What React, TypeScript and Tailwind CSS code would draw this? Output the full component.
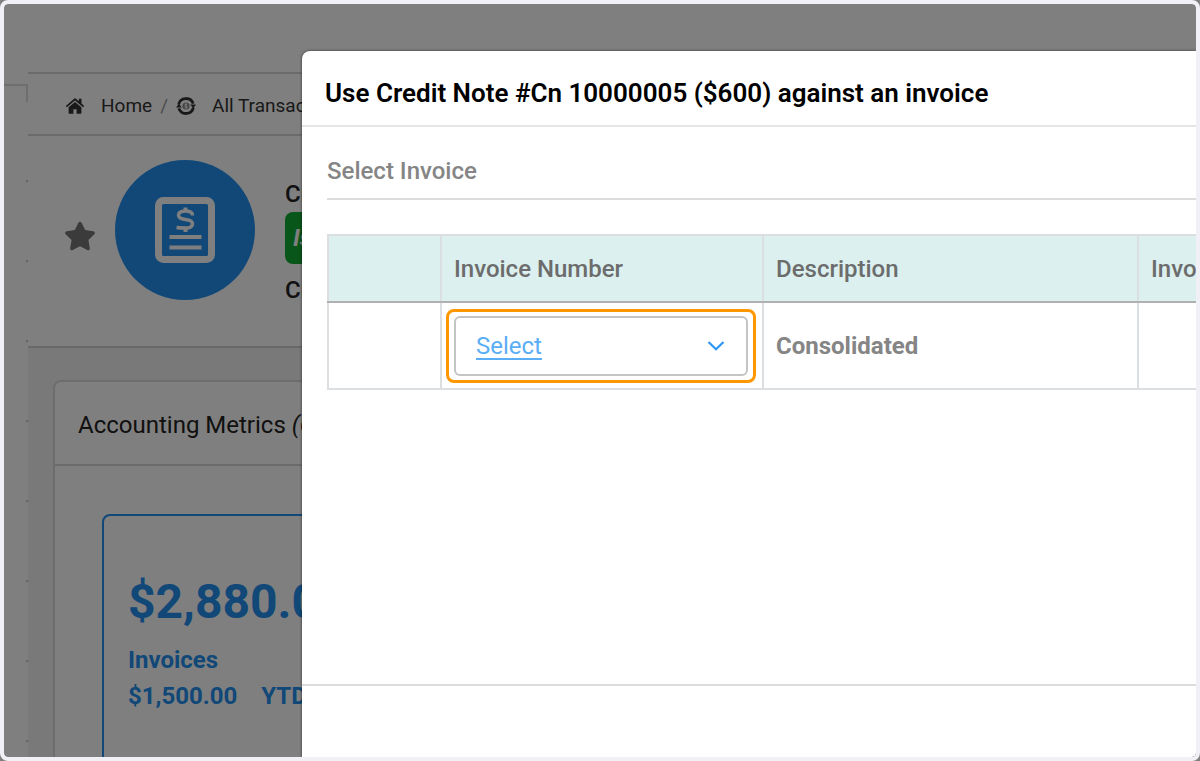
import { FaStar } from 'react-icons/fa';

const railItems = ['a', 'b', 'c', 'd', 'e', 'f', 'g', 'h'];

function HomeIcon() {
  return (
    <svg viewBox="0 0 20 18" className="h-[18px] w-5" fill="currentColor" aria-hidden="true">
      <path d="M10 1 .8 9l1.100 1.300L10 3.400l8.100 6.900L19.200 9 16.500 6.600V1.800h-2.700v2.500z" />
      <path d="M10 4.900 3.600 10.300V16c0 .5.3.8.8.8h4v-4.600h3.200v4.600h4c.5 0 .8-.3.8-.8v-5.700z" />
    </svg>
  );
}

function CycleIcon() {
  return (
    <svg viewBox="0 0 20 20" className="h-5 w-5" fill="none" aria-hidden="true">
      <path d="M2.600 8.500a7.600 7.600 0 0 1 14.600-.9" stroke="currentColor" strokeWidth="2.800" />
      <path d="M17.400 11.500a7.600 7.600 0 0 1-14.600.9" stroke="currentColor" strokeWidth="2.800" />
      <path d="M0 11.500h5.800L2.800 7.800z" fill="currentColor" />
      <path d="M20 8.500h-5.800l3 3.700z" fill="currentColor" />
      <circle cx="10" cy="10" r="3.600" fill="#8a8a8a" />
      <path
        d="M11.400 8.900c-.3-.5-.8-.7-1.400-.7-.8 0-1.300.3-1.300.9 0 1.300 2.700.5 2.700 1.800 0 .6-.6.9-1.400.9-.6 0-1.200-.3-1.400-.7M10 7.300v5.400"
        stroke="white"
        strokeWidth=".8"
      />
    </svg>
  );
}

function InvoiceIcon() {
  return (
    <svg viewBox="0 0 60 66" className="h-[66px] w-[60px]" fill="none" stroke="white" aria-hidden="true">
      <rect x="3.500" y="3.500" width="53" height="59" rx="5" strokeWidth="7" />
      <path
        d="M37.500 18.500c0-3-2.500-4.500-7-4.500s-7 1.500-7 4.300c0 2.900 2.800 3.700 7 4.200s7 1.500 7 4.200c0 2.800-2.500 4.300-7 4.300-3 0-6 0-9-.5"
        strokeWidth="3.500"
      />
      <path d="M30.500 10.500v4M30.500 30.500v4.500" strokeWidth="4" />
      <path d="M14.500 40h32M14.500 50.500h32" strokeWidth="4" />
    </svg>
  );
}

function Page() {
  return (
    <div className="flex h-full">
      {/* Side rail */}
      <aside className="w-6 shrink-0 overflow-hidden pt-20">
        <div className="h-[18px] border-t-2 border-r-2 border-[#dcdcdc]" />
        {railItems.map((item) => (
          <div key={item} className="flex h-20 items-end justify-end">
            <span className="h-0.5 w-0.5 bg-[#c4c4c4]" />
          </div>
        ))}
      </aside>

      <main className="flex min-w-0 flex-1 flex-col">
        <div className="h-[70px] shrink-0 border-b-2 border-[#d6d6d6]" />

        {/* Breadcrumb */}
        <nav className="flex h-[62px] shrink-0 items-center border-b-2 border-[#d6d6d6] pt-1 pl-[37px] text-[19px] whitespace-nowrap text-[#333]">
          <a href="#home" className="flex items-center gap-4">
            <HomeIcon />
            Home
          </a>
          <span className="px-2 text-[#999]">/</span>
          <a href="#transactions" className="flex items-center gap-4">
            <CycleIcon />
            All Transactions
          </a>
        </nav>

        {/* Record header */}
        <section className="flex h-[212px] shrink-0 items-center border-b-2 border-[#d2d2d2] pb-[22px] pl-9">
          <button type="button" aria-label="Favourite" className="text-[#777]">
            <FaStar className="mt-3 h-8 w-8" />
          </button>
          <div className="ml-[19px] flex h-[140px] w-[140px] shrink-0 items-center justify-center rounded-full bg-[#2290f0]">
            <InvoiceIcon />
          </div>
          <div className="ml-[30px] flex flex-col pt-6 text-2xl font-medium whitespace-nowrap text-[#222]">
            <span className="leading-9">Credit</span>
            <span className="rounded-lg bg-[#12ac34] px-2 py-2 leading-9 font-bold text-white italic">Issued</span>
            <span className="pt-2 leading-9">Customer</span>
          </div>
        </section>

        {/* Metrics */}
        <section className="flex-1 overflow-hidden bg-[#f2f2f2] pt-8 pl-[25px]">
          <div className="rounded-lg border-2 border-[#dadada] bg-white">
            <h2 className="flex h-[84px] items-center border-b-2 border-[#d6d6d6] pt-1 pl-[23px] text-2xl whitespace-nowrap text-[#222]">
              Accounting Metrics&nbsp;<em>(Currency)</em>
            </h2>
            <div className="mt-12 ml-[47px] h-[400px] rounded-lg border-2 border-[#2290f0] pt-14 pl-6 font-bold whitespace-nowrap text-[#2290f0]">
              <div className="text-5xl leading-[60px]">$2,880.00</div>
              <div className="mt-2 text-2xl leading-10">Invoices</div>
              <div className="flex gap-6 text-2xl leading-8">
                <span>$1,500.00</span>
                <span>YTD</span>
              </div>
            </div>
          </div>
        </section>
      </main>
    </div>
  );
}

function CreditNoteModal() {
  return (
    <div
      role="dialog"
      aria-labelledby="modal-title"
      className="absolute top-[47px] right-0 bottom-0 left-[298px] flex flex-col overflow-hidden rounded-tl-lg bg-white shadow-[0_0_3px_rgba(0,0,0,0.6)]"
    >
      <header className="flex h-[76px] shrink-0 items-center border-b-2 border-[#e5e5e5] pt-2.5 pl-[23px]">
        <h1 id="modal-title" className="text-[26px] font-semibold whitespace-nowrap text-black">
          Use Credit Note #Cn 10000005 ($600) against an invoice
        </h1>
      </header>

      <div className="flex-1 overflow-hidden pt-6 pl-[25px]">
        <h2 className="h-[49px] border-b-2 border-[#dcdcdc] text-2xl leading-10 font-medium text-[#858585]">
          Select Invoice
        </h2>

        <table className="mt-[34px] w-full table-fixed border-collapse text-left text-2xl text-[#6c6c6c]">
          <colgroup>
            <col className="w-[113px]" />
            <col className="w-[322px]" />
            <col className="w-[375px]" />
            <col />
          </colgroup>
          <thead>
            <tr className="h-[67px] bg-[#dbf0ef]">
              <th className="border-2 border-[#dcdfe1] border-b-[#b0b0b0]" />
              <th className="border-2 border-[#dcdfe1] border-b-[#b0b0b0] px-3 font-medium">Invoice Number</th>
              <th className="border-2 border-[#dcdfe1] border-b-[#b0b0b0] px-3 font-medium">Description</th>
              <th className="border-2 border-r-0 border-[#dcdfe1] border-b-[#b0b0b0] px-3 font-medium">Invoice</th>
            </tr>
          </thead>
          <tbody>
            <tr className="h-[87px]">
              <td className="border-2 border-[#dcdfe1]" />
              <td className="border-2 border-[#dcdfe1] pr-1.5 pl-1">
                <div className="relative rounded-lg border-3 border-[#ff9800] px-[5px] py-1">
                  <select
                    aria-label="Invoice number"
                    className="block h-[60px] w-full appearance-none rounded-md border-2 border-[#c4c4c4] bg-white pl-5 text-2xl text-[#5aaef5] underline underline-offset-4"
                  >
                    <option>Select</option>
                  </select>
                  <svg
                    viewBox="0 0 18 12"
                    className="pointer-events-none absolute top-7 right-7 h-3 w-[18px]"
                    fill="none"
                    stroke="#2d97f3"
                    strokeWidth="2.200"
                    aria-hidden="true"
                  >
                    <path d="M1.500 2 9 9.300 16.500 2" />
                  </svg>
                </div>
              </td>
              <td className="border-2 border-[#dcdfe1] px-3 font-bold text-[#858585]">Consolidated</td>
              <td className="border-2 border-r-0 border-[#dcdfe1]" />
            </tr>
          </tbody>
        </table>
      </div>

      <footer className="h-[73px] shrink-0 border-t-2 border-[#dcdcdc]" />
    </div>
  );
}

export default function App() {
  return (
    <div className="h-screen bg-[#808080] font-['Roboto',sans-serif]">
      <div className="h-full overflow-hidden rounded-lg border-4 border-[#f1f0f6] bg-white">
        <div className="relative h-full overflow-hidden rounded-sm">
          <Page />
          <div className="absolute inset-0 bg-black/50" />
          <CreditNoteModal />
        </div>
      </div>
    </div>
  );
}
